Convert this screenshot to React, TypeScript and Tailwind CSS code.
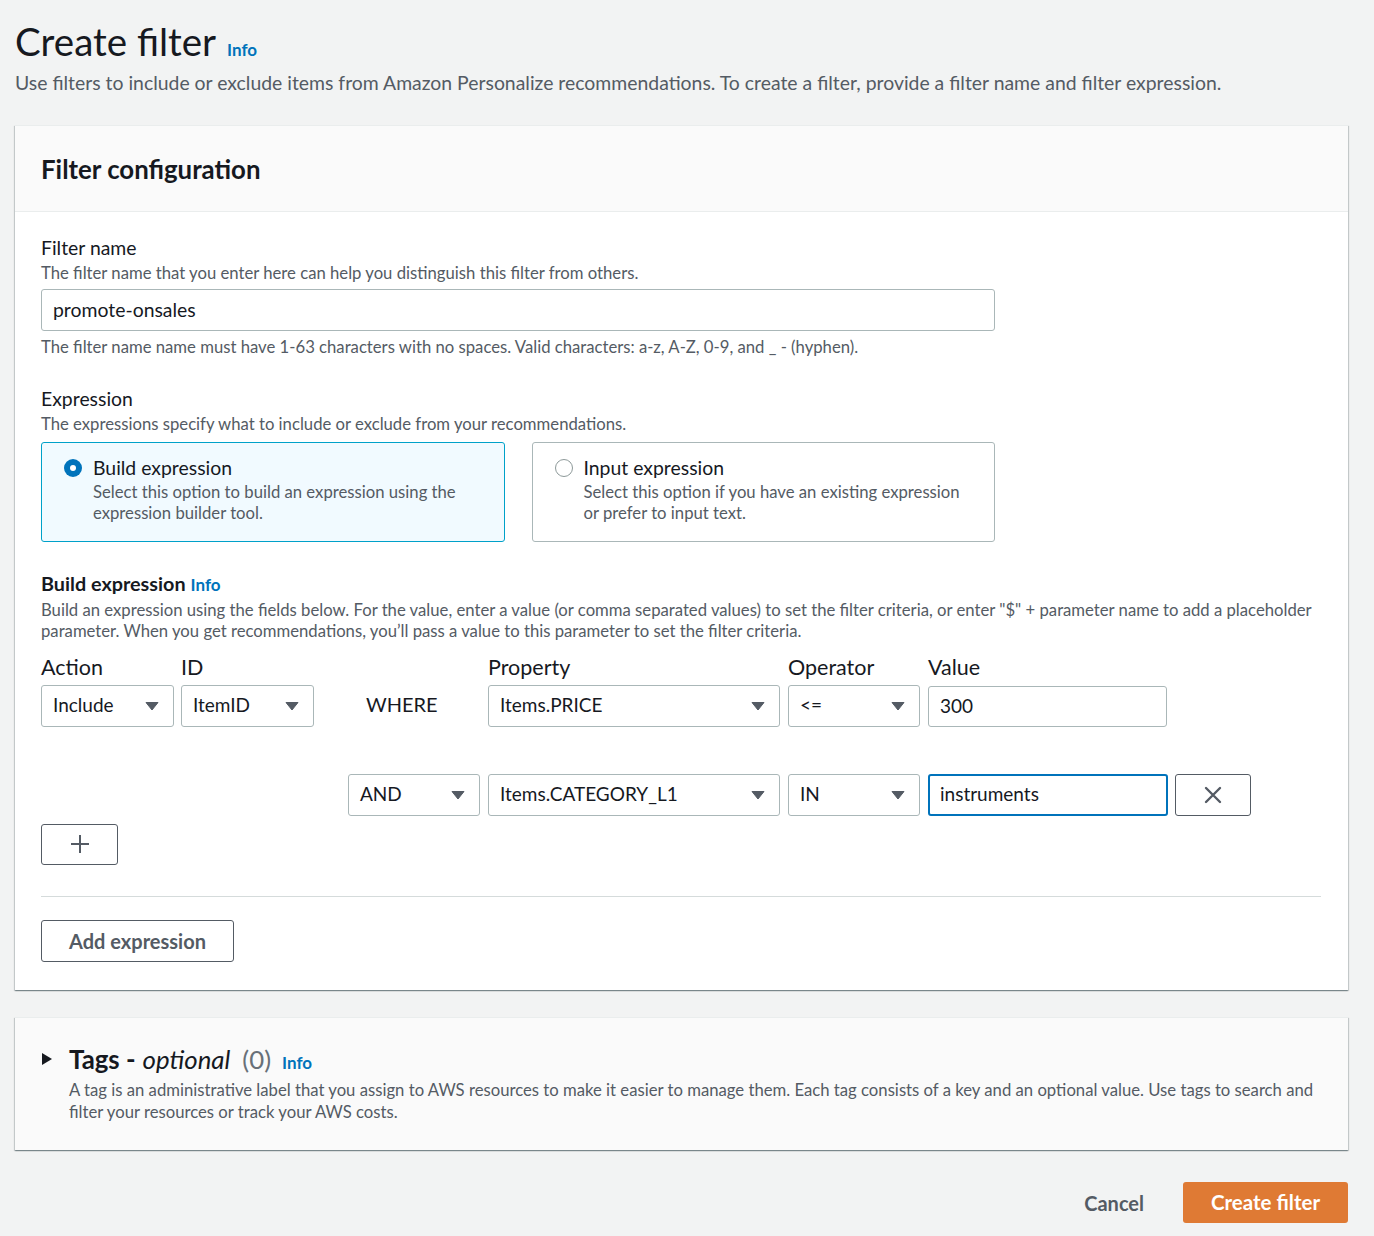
import React from 'react';

const font = { fontFamily: 'Lato, "Open Sans", sans-serif' };

const Caret: React.FC = () => (
    <svg width="14" height="10" viewBox="0 0 14 10" className="shrink-0">
        <path d="M1 1.5 L13 1.5 L7 9 Z" fill="#545b64" stroke="#545b64" strokeWidth="1" strokeLinejoin="round" />
    </svg>
);

const Select: React.FC<{ value: string; className?: string }> = ({ value, className = '' }) => (
    <div className={`h-[42px] bg-white border border-[#aab7b8] rounded-[3px] flex items-center justify-between pl-[11px] pr-[14px] text-[19px] text-[#16191f] ${className}`}>
        <span>{value}</span>
        <Caret />
    </div>
);

const Info: React.FC = () => (
    <span className="text-[17px] font-bold text-[#0073bb]">Info</span>
);

const App: React.FC = () => {
    return (
        <div className="min-h-[1236px] bg-[#f2f3f3] pl-[15px] pr-[26px] pt-[18px] pb-[14px] text-[#16191f]" style={font}>
            <div className="flex items-baseline gap-[11px]">
                <h1 className="text-[38.5px] leading-[46px] font-normal">Create filter</h1>
                <Info />
            </div>
            <p className="mt-[7px] text-[19.4px] leading-[24px] text-[#545b64]">
                Use filters to include or exclude items from Amazon Personalize recommendations. To create a filter, provide a filter name and filter expression.
            </p>

            {/* filter configuration panel */}
            <div className="mt-[30px] bg-white border-t border-[#eaeded] shadow-[0_1px_1px_0_rgba(0,28,36,0.3),1px_1px_1px_0_rgba(0,28,36,0.15),-1px_1px_1px_0_rgba(0,28,36,0.15)]">
                <div className="h-[86px] bg-[#fafafa] border-b border-[#eaeded] flex items-center px-[26px]">
                    <h2 className="text-[25.8px] font-bold leading-[30px]">Filter configuration</h2>
                </div>

                <div className="pl-[26px] pr-[27px] pt-[24px] pb-[28px]">
                    <div className="text-[19.4px] leading-[24px]">Filter name</div>
                    <div className="mt-[2px] text-[16.7px] leading-[22px] text-[#545b64]">The filter name that you enter here can help you distinguish this filter from others.</div>
                    <div className="mt-[5px] w-[954px] h-[42px] bg-white border border-[#aab7b8] rounded-[3px] flex items-center px-[11px] text-[19.4px]">promote-onsales</div>
                    <div className="mt-[5px] text-[16.7px] leading-[22px] text-[#545b64]">The filter name name must have 1-63 characters with no spaces. Valid characters: a-z, A-Z, 0-9, and _ - (hyphen).</div>

                    <div className="mt-[29px] text-[19.4px] leading-[24px]">Expression</div>
                    <div className="mt-[2px] text-[16.7px] leading-[22px] text-[#545b64]">The expressions specify what to include or exclude from your recommendations.</div>
                    <div className="mt-[7px] flex gap-[27px] w-[954px]">
                        <div className="w-[464px] h-[100px] border border-[#00a1c9] bg-[#f1faff] rounded-[3px] flex gap-[11px] pl-[22px] pt-[13px]">
                            <div className="mt-[3px] w-[18px] h-[18px] rounded-full bg-[#0073bb] flex items-center justify-center shrink-0">
                                <div className="w-[6px] h-[6px] rounded-full bg-white" />
                            </div>
                            <div>
                                <div className="text-[19.4px] leading-[24px]">Build expression</div>
                                <div className="mt-[2px] text-[16.7px] leading-[21px] text-[#545b64]">Select this option to build an expression using the<br />expression builder tool.</div>
                            </div>
                        </div>
                        <div className="w-[464px] h-[100px] border border-[#aab7b8] bg-white rounded-[3px] flex gap-[11px] pl-[22px] pt-[13px]">
                            <div className="mt-[3px] w-[18px] h-[18px] rounded-full border-[1.5px] border-[#8d9999] bg-white shrink-0" />
                            <div>
                                <div className="text-[19.4px] leading-[24px]">Input expression</div>
                                <div className="mt-[2px] text-[16.7px] leading-[21px] text-[#545b64]">Select this option if you have an existing expression<br />or prefer to input text.</div>
                            </div>
                        </div>
                    </div>

                    <div className="mt-[29px] flex items-baseline gap-[5px]">
                        <span className="text-[19.8px] leading-[24px] font-bold">Build expression</span>
                        <Info />
                    </div>
                    <div className="mt-[2px] text-[16.7px] leading-[21px] text-[#545b64]">
                        Build an expression using the fields below. For the value, enter a value (or comma separated values) to set the filter criteria, or enter "$" + parameter name to add a placeholder parameter. When you get recommendations, you’ll pass a value to this parameter to set the filter criteria.
                    </div>

                    {/* first row with labels */}
                    <div className="mt-[12px] flex items-end">
                        <div className="w-[133px]">
                            <div className="text-[21.5px] leading-[26px] mb-[5px]">Action</div>
                            <Select value="Include" />
                        </div>
                        <div className="w-[133px] ml-[7px]">
                            <div className="text-[21.5px] leading-[26px] mb-[5px]">ID</div>
                            <Select value="ItemID" />
                        </div>
                        <div className="w-[174px] h-[42px] flex items-center pl-[52px] pb-[3px] text-[20px]">WHERE</div>
                        <div className="w-[292px]">
                            <div className="text-[21.5px] leading-[26px] mb-[5px]">Property</div>
                            <Select value="Items.PRICE" />
                        </div>
                        <div className="w-[132px] ml-[8px]">
                            <div className="text-[21.5px] leading-[26px] mb-[5px]">Operator</div>
                            <Select value="<=" />
                        </div>
                        <div className="w-[239px] ml-[8px]">
                            <div className="text-[21.5px] leading-[26px] mb-[6px]">Value</div>
                            <div className="h-[41px] bg-white border border-[#aab7b8] rounded-[3px] flex items-center px-[11px] text-[19px]">300</div>
                        </div>
                    </div>

                    {/* second row */}
                    <div className="mt-[47px] flex">
                        <div className="w-[307px]" />
                        <Select value="AND" className="w-[132px]" />
                        <Select value="Items.CATEGORY_L1" className="w-[292px] ml-[8px]" />
                        <Select value="IN" className="w-[132px] ml-[8px]" />
                        <div className="w-[240px] ml-[8px] h-[42px] bg-white border-2 border-[#0073bb] rounded-[3px] flex items-center px-[10px] text-[19px]">instruments</div>
                        <div className="w-[76px] ml-[7px] h-[42px] bg-white border border-[#545b64] rounded-[3px] flex items-center justify-center">
                            <svg width="18" height="18" viewBox="0 0 18 18">
                                <path d="M2 2 L16 16 M16 2 L2 16" stroke="#545b64" strokeWidth="2.4" strokeLinecap="round" />
                            </svg>
                        </div>
                    </div>

                    <div className="mt-[8px] w-[77px] h-[41px] bg-white border border-[#545b64] rounded-[3px] flex items-center justify-center">
                        <svg width="20" height="20" viewBox="0 0 20 20">
                            <path d="M10 1 V19 M1 10 H19" stroke="#545b64" strokeWidth="2" />
                        </svg>
                    </div>

                    <div className="mt-[31px] border-t border-[#d5dbdb]" />

                    <div className="mt-[23px] w-[193px] h-[42px] bg-white border border-[#545b64] rounded-[3px] flex items-center justify-center text-[20px] font-bold text-[#545b64]">
                        Add expression
                    </div>
                </div>
            </div>

            {/* tags panel */}
            <div className="mt-[27px] bg-[#fafafa] border-t border-[#eaeded] shadow-[0_1px_1px_0_rgba(0,28,36,0.3),1px_1px_1px_0_rgba(0,28,36,0.15),-1px_1px_1px_0_rgba(0,28,36,0.15)] pl-[26px] pr-[27px] pt-[26px] pb-[27px]">
                <div className="flex items-center">
                    <svg width="12" height="14" viewBox="0 0 12 14" className="mr-[16px]">
                        <path d="M1 1 L11 7 L1 13 Z" fill="#16191f" />
                    </svg>
                    <div className="flex items-baseline">
                        <span className="text-[25.8px] leading-[30px] font-bold">Tags - </span>
                        <span className="text-[25.8px] leading-[30px] italic ml-[7px]">optional</span>
                        <span className="text-[25.8px] leading-[30px] text-[#687078] ml-[12px]">(0)</span>
                        <span className="ml-[11px]"><Info /></span>
                    </div>
                </div>
                <div className="pl-[28px] mt-[4px] text-[16.7px] leading-[22px] text-[#545b64]">
                    A tag is an administrative label that you assign to AWS resources to make it easier to manage them. Each tag consists of a key and an optional value. Use tags to search and filter your resources or track your AWS costs.
                </div>
            </div>

            <div className="mt-[32px] flex justify-end items-center gap-[19px]">
                <div className="h-[41px] px-[20px] flex items-center text-[20px] font-bold text-[#545b64]">Cancel</div>
                <div className="h-[41px] w-[165px] bg-[#df7a34] rounded-[3px] flex items-center justify-center text-[20.5px] font-bold text-white">Create filter</div>
            </div>
        </div>
    );
};

export default App;
